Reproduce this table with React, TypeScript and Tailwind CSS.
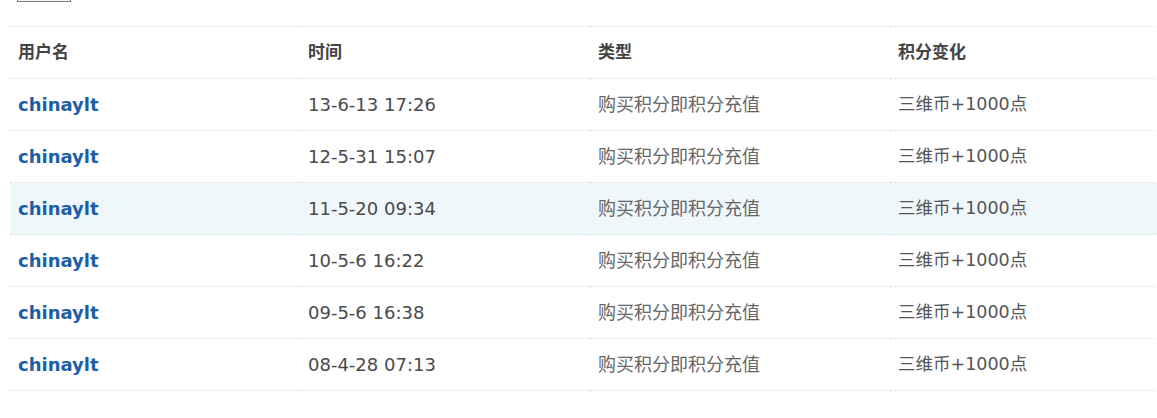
const rows = [
  { user: "chinaylt", time: "13-6-13 17:26" },
  { user: "chinaylt", time: "12-5-31 15:07" },
  { user: "chinaylt", time: "11-5-20 09:34" },
  { user: "chinaylt", time: "10-5-6 16:22" },
  { user: "chinaylt", time: "09-5-6 16:38" },
  { user: "chinaylt", time: "08-4-28 07:13" },
];

const cjk = "font-['DejaVu_Sans','Noto_Sans_CJK_SC',sans-serif]";

export default function App() {
  return (
    <div className={`h-[418px] w-[1157px] overflow-hidden bg-white ${cjk} text-[18px]`}>
      <div className="ml-[17px] -mt-[20px] h-[22px] w-[54px] border border-[#7d7d7d] bg-[#f4f4f4]" />
      <table className="ml-[10px] mt-[24px] w-[1160px] table-fixed border-collapse">
        <colgroup>
          <col className="w-[290px]" />
          <col className="w-[290px]" />
          <col className="w-[300px]" />
          <col />
        </colgroup>
        <thead>
          <tr className="h-[52px] border-y border-dotted border-[#c2e1f7]">
            {["用户名", "时间", "类型", "积分变化"].map((h) => (
              <th key={h} className="pl-[8px] text-left align-middle font-bold text-[17px] text-[#444]">
                {h}
              </th>
            ))}
          </tr>
        </thead>
        <tbody>
          {rows.map((r, i) => (
            <tr
              key={r.time}
              className={`h-[52px] border-b border-dotted border-[#c2e1f7] ${i === 2 ? "bg-[#f0f7fb]" : ""}`}
            >
              <td className="pl-[8px] font-bold text-[#1d5fa6]">{r.user}</td>
              <td className="pl-[8px] text-[#4a4a4a]">{r.time}</td>
              <td className="pl-[8px] text-[18px] text-[#666]">购买积分即积分充值</td>
              <td className="pl-[8px] text-[17.5px] text-[#555]">三维币+1000点</td>
            </tr>
          ))}
        </tbody>
      </table>
    </div>
  );
}
